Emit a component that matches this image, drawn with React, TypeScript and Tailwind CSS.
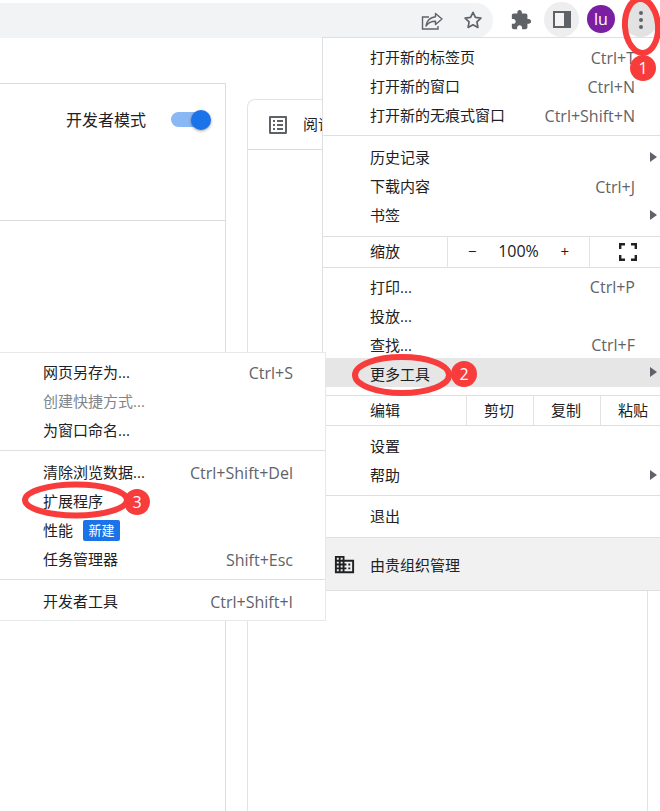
import { ReactNode } from "react";

const FONT = "font-['Open_Sans','Noto_Sans_CJK_SC',sans-serif]";

function Row({ label, keys, arrow, active, low }: { label: string; keys?: string; arrow?: boolean; active?: boolean; low?: boolean }) {
    return (
        <div className={`relative flex h-[29px] items-center justify-between pl-[47px] pr-[32px] ${active ? "bg-[#e6e6e6]" : ""} ${low ? "pt-[3px]" : ""}`}>
            <span className="text-[#202124]">{label}</span>
            {keys && <span className="text-[16px] text-[#5f6368]">{keys}</span>}
            {arrow && <span className="absolute left-[327px] top-[9px] h-0 w-0 border-y-[5px] border-l-[7px] border-y-transparent border-l-[#5f6368]" />}
        </div>
    );
}

function SubRow({ keys, children }: { keys?: string; children: ReactNode }) {
    return (
        <div className="flex h-[29px] items-center justify-between pl-[43px] pr-[32px]">
            {children}
            {keys && <span className="text-[16px] text-[#5f6368]">{keys}</span>}
        </div>
    );
}

function Divider() {
    return <div className="h-px bg-[#dedfe1]" />;
}

function Badge({ n, className }: { n: number; className: string }) {
    return (
        <div className={`absolute flex h-[26px] w-[26px] items-center justify-center rounded-full bg-[#f83b3b] text-[16px] text-white ${className}`}>
            {n}
        </div>
    );
}

function ToolbarIcons() {
    return (
        <div className="flex h-[38px] w-[260px] items-center">
            <svg width="22" height="22" viewBox="0 0 22 22" fill="none" stroke="#5f6368" strokeWidth="1.4" className="ml-[15px] mt-[6px]">
                <path d="M8 6H1.5v12H17v-3" />
                <path d="M14.5 2.5l6.5 5.5-6.5 5.5v-3.2c-4 0-7 1.2-9.5 4.7.6-5 3.5-8.5 9.5-9.3z" strokeLinejoin="round" />
            </svg>
            <svg width="20" height="20" viewBox="0 0 24 24" fill="none" stroke="#5f6368" strokeWidth="2" strokeLinejoin="round" className="ml-[20px] mt-[2px]">
                <path d="M12 2.8l2.9 6 6.6.9-4.8 4.6 1.2 6.6-5.9-3.2-5.9 3.2 1.2-6.6-4.8-4.6 6.6-.9z" />
            </svg>
            <svg width="22" height="22" viewBox="0 0 24 24" fill="#5f6368" className="ml-[27px] mt-px">
                <path d="M20.5 11H19V7c0-1.1-.9-2-2-2h-4V3.5C13 2.12 11.88 1 10.5 1S8 2.12 8 3.5V5H4c-1.1 0-1.99.9-1.99 2v3.8H3.5c1.49 0 2.7 1.21 2.7 2.7s-1.21 2.7-2.7 2.7H2V20c0 1.1.9 2 2 2h3.8v-1.5c0-1.49 1.21-2.7 2.7-2.7 1.49 0 2.7 1.21 2.7 2.7V22H17c1.1 0 2-.9 2-2v-4h1.5c1.38 0 2.5-1.12 2.5-2.5S21.88 11 20.5 11z" />
            </svg>
            <div className="ml-[12px] mt-px flex h-[35px] w-[35px] items-center justify-center rounded-full bg-[#eeeeee]">
                <div className="flex h-[17px] w-[18px] justify-end border-2 border-[#5f6368] bg-[#f4f4f4]">
                    <div className="w-[5px] bg-[#5f6368]" />
                </div>
            </div>
            <div className="ml-[8px] flex h-[28px] w-[28px] items-center justify-center rounded-full bg-[#7a1fa2] text-[16px] text-white">lu</div>
            <div className="ml-[8px] mt-px flex h-[35px] w-[35px] shrink-0 flex-col items-center justify-center gap-[3px] rounded-full bg-[#e2e2e2]">
                <i className="h-[4px] w-[4px] rounded-full bg-[#5f6368]" />
                <i className="h-[4px] w-[4px] rounded-full bg-[#5f6368]" />
                <i className="h-[4px] w-[4px] rounded-full bg-[#5f6368]" />
            </div>
        </div>
    );
}

function MainMenu() {
    return (
        <div className="absolute left-[322px] top-[37px] w-[345px] border-l border-t border-[#dedfe1] bg-white">
            <div className="pb-[5px] pt-[5px]">
                <Row label="打开新的标签页" keys="Ctrl+T" />
                <Row label="打开新的窗口" keys="Ctrl+N" />
                <Row label="打开新的无痕式窗口" keys="Ctrl+Shift+N" />
            </div>
            <Divider />
            <div className="pb-[6px] pt-[7px]">
                <Row label="历史记录" arrow />
                <Row label="下载内容" keys="Ctrl+J" />
                <Row label="书签" arrow />
            </div>
            <Divider />
            <div className="flex h-[30px] items-center text-[#202124]">
                <span className="mb-[2px] w-[124px] pl-[47px]">缩放</span>
                <div className="flex h-full w-[143px] items-center justify-between border-x border-[#e3e3e3] px-[20px]">
                    <span className="mb-[2px]">−</span>
                    <span className="mb-[2px] text-[16px]">100%</span>
                    <span className="mb-[2px]">+</span>
                </div>
                <svg width="18" height="18" viewBox="0 0 18 18" fill="none" stroke="#202124" strokeWidth="2.4" className="ml-[29px]">
                    <path d="M1.2 6V1.2H6M12 1.2h4.8V6M1.2 12v4.8H6M12 16.8h4.8V12" />
                </svg>
            </div>
            <Divider />
            <div className="pb-[8px] pt-[3px]">
                <Row low label="打印..." keys="Ctrl+P" />
                <Row low label="投放..." />
                <Row low label="查找..." keys="Ctrl+F" />
                <Row low label="更多工具" arrow active />
            </div>
            <Divider />
            <div className="flex h-[29px] items-center text-[#202124]">
                <span className="w-[143px] pl-[47px]">编辑</span>
                <span className="flex h-full w-[67px] items-center justify-center border-l border-[#e3e3e3] pr-[2px]">剪切</span>
                <span className="flex h-full w-[67px] items-center justify-center border-l border-[#e3e3e3] pr-[2px]">复制</span>
                <span className="flex h-full w-[67px] items-center justify-center border-l border-[#e3e3e3] pr-[2px]">粘贴</span>
            </div>
            <Divider />
            <div className="pb-[5px] pt-[6px]">
                <Row label="设置" />
                <Row label="帮助" arrow />
            </div>
            <Divider />
            <div className="pb-[6px] pt-[6px]">
                <Row label="退出" />
            </div>
            <Divider />
            <div className="flex h-[52px] items-center bg-[#f1f1f1] text-[#202124]">
                <svg width="23" height="23" viewBox="0 0 24 24" fill="#202124" className="ml-[10px]">
                    <path d="M12 7V3H2v18h20V7H12zM6 19H4v-2h2v2zm0-4H4v-2h2v2zm0-4H4V9h2v2zm0-4H4V5h2v2zm4 12H8v-2h2v2zm0-4H8v-2h2v2zm0-4H8V9h2v2zm0-4H8V5h2v2zm10 12h-8v-2h2v-2h-2v-2h2v-2h-2V9h8v10zm-2-8h-2v2h2v-2zm0 4h-2v2h2v-2z" />
                </svg>
                <span className="ml-[14px] mt-[2px]">由贵组织管理</span>
            </div>
            <Divider />
        </div>
    );
}

function SubMenu() {
    return (
        <div className="absolute left-0 top-[352px] w-[326px] border-b border-r border-t border-[#e8e8e8] bg-white text-[#202124]">
            <div className="pb-[5px] pt-[5px]">
                <SubRow keys="Ctrl+S"><span>网页另存为...</span></SubRow>
                <SubRow><span className="text-[#80868b]">创建快捷方式...</span></SubRow>
                <SubRow><span>为窗口命名...</span></SubRow>
            </div>
            <Divider />
            <div className="pb-[5px] pt-[7px]">
                <SubRow keys="Ctrl+Shift+Del"><span>清除浏览数据...</span></SubRow>
                <SubRow><span>扩展程序</span></SubRow>
                <SubRow>
                    <span className="flex items-center">
                        性能
                        <span className="ml-[10px] flex h-[21px] w-[37px] items-center justify-center rounded-[2px] bg-[#1a73e8] text-[13px] text-white">新建</span>
                    </span>
                </SubRow>
                <SubRow keys="Shift+Esc"><span>任务管理器</span></SubRow>
            </div>
            <Divider />
            <div className="pb-[4px] pt-[7px]">
                <SubRow keys="Ctrl+Shift+I"><span>开发者工具</span></SubRow>
            </div>
        </div>
    );
}

export default function App() {
    return (
        <div className={`relative h-[811px] w-[660px] overflow-hidden bg-white text-[15px] ${FONT}`}>
            {/* toolbar */}
            <div className="flex h-[38px] items-start">
                <div className="mt-[3px] h-[35px] w-[493px] rounded-r-[18px] bg-[#f1f3f4]" />
            </div>
            <div className="absolute left-[406px] top-0">
                <ToolbarIcons />
            </div>

            {/* page behind the menus */}
            <div className="flex h-[773px] items-start gap-[21px]">
                <div className="mt-[45px] h-[728px] w-[226px] border-r border-t border-[#dadce0]">
                    <div className="flex h-[137px] items-start border-b border-[#dadce0] pl-[66px] pt-[23px]">
                        <span className="text-[16px] leading-[26px] text-[#202124]">开发者模式</span>
                        <div className="relative ml-[25px] mt-[5px] h-[15px] w-[34px] rounded-full bg-[#8ab8f5]">
                            <div className="absolute -top-[2.5px] left-[19.5px] h-[20px] w-[20px] rounded-full bg-[#1a73e8] shadow-[0_1px_3px_rgba(0,0,0,0.4)]" />
                        </div>
                    </div>
                </div>
                <div className="mt-[61px] h-[712px] w-[401px] rounded-tl-[8px] border-x border-t border-[#e3e3e3]">
                    <div className="flex h-[50px] items-center border-b border-[#dadce0] pl-[18px]">
                        <svg width="24" height="24" viewBox="0 0 24 24" fill="#5f6368">
                            <path d="M19 5v14H5V5h14m1.1-2H3.9c-.5 0-.9.4-.9.9v16.2c0 .4.4.9.9.9h16.2c.4 0 .9-.5.9-.9V3.9c0-.5-.5-.9-.9-.9zM11 7h6v2h-6V7zm0 4h6v2h-6v-2zm0 4h6v2h-6zM7 7h2v2H7zm0 4h2v2H7zm0 4h2v2H7z" />
                        </svg>
                        <span className="ml-[13px] text-[#202124]">阅读清单</span>
                    </div>
                </div>
            </div>

            <MainMenu />
            <SubMenu />

            {/* red annotations */}
            <svg width="660" height="811" viewBox="0 0 660 811" fill="none" stroke="#f83b3b" className="absolute left-0 top-0">
                <ellipse cx="641.5" cy="26" rx="16.5" ry="27" strokeWidth="6" transform="rotate(-4 641.5 26)" />
                <ellipse cx="402" cy="375" rx="47" ry="18" strokeWidth="6" />
                <ellipse cx="76" cy="500" rx="51" ry="15.5" strokeWidth="6" />
            </svg>
            <Badge n={1} className="left-[630px] top-[55px]" />
            <Badge n={2} className="left-[451px] top-[361px]" />
            <Badge n={3} className="left-[124px] top-[489px]" />
        </div>
    );
}
